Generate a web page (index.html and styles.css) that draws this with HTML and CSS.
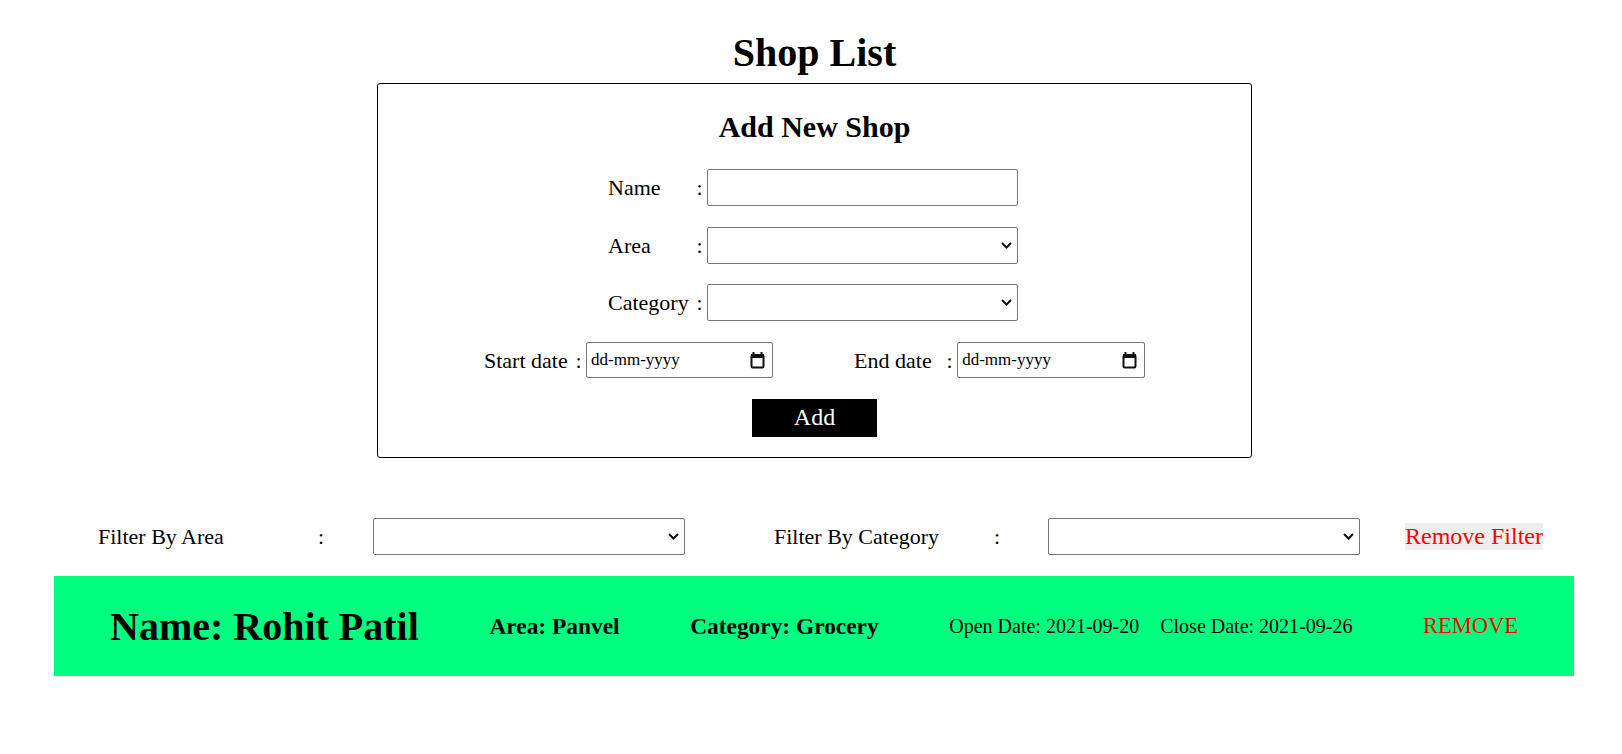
FILE: index.html
```html
<!DOCTYPE html>
<html lang="en">
<head>
<meta charset="utf-8">
<title>Shop List</title>
<link rel="stylesheet" href="styles.css">
</head>
<body>
<div class="page">
  <section class="top">
    <h1 class="title">Shop List</h1>
    <form class="add-form">
      <h2 class="form-title">Add New Shop</h2>
      <div class="rows">
        <div class="row row-field">
          <span class="lbl">Name</span><span class="colon">:</span>
          <input class="field" type="text">
        </div>
        <div class="row row-field">
          <span class="lbl">Area</span><span class="colon">:</span>
          <div class="select-wrap">
            <select class="field"><option></option></select>
            <svg class="chev" width="11" height="7" viewBox="0 0 11 7" aria-hidden="true"><path d="M1 1 L5.5 5.5 L10 1" fill="none" stroke="#111" stroke-width="2"/></svg>
          </div>
        </div>
        <div class="row row-field">
          <span class="lbl">Category</span><span class="colon">:</span>
          <div class="select-wrap">
            <select class="field"><option></option></select>
            <svg class="chev" width="11" height="7" viewBox="0 0 11 7" aria-hidden="true"><path d="M1 1 L5.5 5.5 L10 1" fill="none" stroke="#111" stroke-width="2"/></svg>
          </div>
        </div>
        <div class="row date-row">
          <div class="date-group">
            <span class="lbl lbl-start">Start date</span><span class="colon">:</span>
            <div class="date-field">
              <span class="date-text">dd-mm-yyyy</span>
              <svg class="cal" width="15" height="18" viewBox="0 0 15 18" aria-hidden="true">
                <rect x="1.5" y="4" width="12" height="12.5" rx="1.2" fill="none" stroke="#111" stroke-width="2"/>
                <rect x="1" y="3" width="13" height="4" fill="#111"/>
                <rect x="2.5" y="1" width="2" height="3" fill="#111"/>
                <rect x="10.5" y="1" width="2" height="3" fill="#111"/>
              </svg>
            </div>
          </div>
          <div class="date-group">
            <span class="lbl lbl-end">End date</span><span class="colon">:</span>
            <div class="date-field date-field-end">
              <span class="date-text">dd-mm-yyyy</span>
              <svg class="cal" width="15" height="18" viewBox="0 0 15 18" aria-hidden="true">
                <rect x="1.5" y="4" width="12" height="12.5" rx="1.2" fill="none" stroke="#111" stroke-width="2"/>
                <rect x="1" y="3" width="13" height="4" fill="#111"/>
                <rect x="2.5" y="1" width="2" height="3" fill="#111"/>
                <rect x="10.5" y="1" width="2" height="3" fill="#111"/>
              </svg>
            </div>
          </div>
        </div>
        <div class="row">
          <button class="add-btn" type="button">Add</button>
        </div>
      </div>
    </form>
  </section>

  <div class="filters">
    <span class="f-label">Filter By Area</span><span class="f-colon">:</span>
    <div class="select-wrap f-wrap">
      <select class="f-select"><option></option></select>
      <svg class="chev" width="11" height="7" viewBox="0 0 11 7" aria-hidden="true"><path d="M1 1 L5.5 5.5 L10 1" fill="none" stroke="#111" stroke-width="2"/></svg>
    </div>
    <span class="f-label">Filter By Category</span><span class="f-colon f-colon-cat">:</span>
    <div class="select-wrap f-wrap f-wrap-last">
      <select class="f-select"><option></option></select>
      <svg class="chev" width="11" height="7" viewBox="0 0 11 7" aria-hidden="true"><path d="M1 1 L5.5 5.5 L10 1" fill="none" stroke="#111" stroke-width="2"/></svg>
    </div>
    <button class="remove-filter" type="button">Remove Filter</button>
  </div>

  <div class="card">
    <h1 class="card-name">Name: Rohit Patil</h1>
    <h3 class="card-meta">Area: Panvel</h3>
    <h3 class="card-meta">Category: Grocery</h3>
    <div class="card-dates">
      <span>Open Date: 2021-09-20</span>
      <span>Close Date: 2021-09-26</span>
    </div>
    <span class="card-remove">REMOVE</span>
  </div>
</div>
</body>
</html>
```

FILE: styles.css
```css
* { box-sizing: border-box; }

html, body {
  margin: 0;
  padding: 0;
  background: #ffffff;
}

body {
  font-family: "Liberation Serif", "Times New Roman", serif;
  font-size: 20px;
  color: #000;
}

.page {
  width: 1622px;
}

.top {
  width: 875px;
  margin-left: 377px;
  padding-top: 30px;
}

.title {
  margin: 0;
  font-size: 40px;
  line-height: 46px;
  font-weight: bold;
  text-align: center;
}

.add-form {
  margin-top: 7px;
  border: 1px solid #000;
  border-radius: 3px;
  padding: 26px 0 21px;
}

.form-title {
  margin: 0;
  font-size: 30px;
  line-height: 34px;
  font-weight: bold;
  text-align: center;
}

.rows {
  margin-top: 25px;
  display: flex;
  flex-direction: column;
  gap: 20.5px;
}

.row {
  display: flex;
  justify-content: center;
  align-items: center;
  height: 37px;
  font-size: 22px;
}

.row-field {
  justify-content: flex-start;
  padding-left: 230px;
}

.lbl {
  display: inline-block;
  width: 83px;
  white-space: nowrap;
  line-height: 25px;
}

.lbl-start {
  width: 86px;
}

.lbl-end {
  width: 87px;
}

.colon {
  display: inline-block;
  width: 6.1px;
  margin: 0 4.5px 0 5.5px;
  line-height: 25px;
}

.select-wrap {
  position: relative;
  display: flex;
}

.chev {
  position: absolute;
  right: 6px;
  top: 15px;
  pointer-events: none;
}

.field {
  width: 311px;
  height: 37px;
  border: 1px solid #767676;
  border-radius: 2px;
  background: #fff;
  font-family: "Liberation Serif", serif;
  font-size: 17px;
  padding: 1px 4px;
  margin: 0;
  appearance: none;
  -webkit-appearance: none;
}

.date-row {
  justify-content: flex-start;
  padding-left: 106px;
  gap: 81px;
}

.date-group {
  display: flex;
  align-items: center;
}

.date-field {
  width: 187px;
  height: 36px;
  border: 1px solid #767676;
  border-radius: 2px;
  background: #fff;
  display: flex;
  align-items: center;
  justify-content: space-between;
  padding: 0 7px 0 4px;
}

.date-field-end {
  width: 188px;
}

.date-text {
  font-size: 17px;
  line-height: 20px;
  color: #000;
}

.cal {
  display: block;
  flex: none;
}

.add-btn {
  width: 125px;
  height: 38px;
  border: none;
  background: #000;
  color: #fff;
  font-family: "Liberation Serif", serif;
  font-size: 24px;
  padding: 0;
  margin: 0;
}

.filters {
  margin-top: 60px;
  height: 37px;
  display: flex;
  align-items: center;
  padding-left: 98px;
  font-size: 22px;
}

.f-label {
  width: 220px;
  line-height: 25px;
  white-space: nowrap;
}

.f-colon {
  width: 6px;
  margin-right: 49px;
  line-height: 25px;
}

.f-colon-cat {
  margin-right: 48px;
}

.f-wrap {
  margin-right: 89px;
}

.f-wrap-last {
  margin-right: 45px;
}

.f-select {
  width: 312px;
  height: 37px;
  border: 1px solid #767676;
  border-radius: 2px;
  background: #fff;
  margin: 0;
  appearance: none;
  -webkit-appearance: none;
}

.remove-filter {
  border: none;
  background: #efefef;
  color: #ff0000;
  font-family: "Liberation Serif", serif;
  font-size: 24px;
  line-height: 27px;
  height: 27px;
  padding: 0;
  margin: 0;
}

.card {
  margin-top: 21px;
  margin-left: 54px;
  width: 1520px;
  height: 100px;
  background: #00ff7f;
  display: flex;
  align-items: center;
  justify-content: space-between;
  padding: 0 56px;
}

.card-name {
  margin: 0;
  font-size: 40px;
  font-weight: bold;
  white-space: nowrap;
}

.card-meta {
  margin: 0;
  font-size: 23.4px;
  font-weight: bold;
  white-space: nowrap;
}

.card-dates {
  display: flex;
  gap: 21px;
  font-size: 20px;
  white-space: nowrap;
}

.card-remove {
  color: #ff0000;
  font-size: 22.5px;
  white-space: nowrap;
}
```
